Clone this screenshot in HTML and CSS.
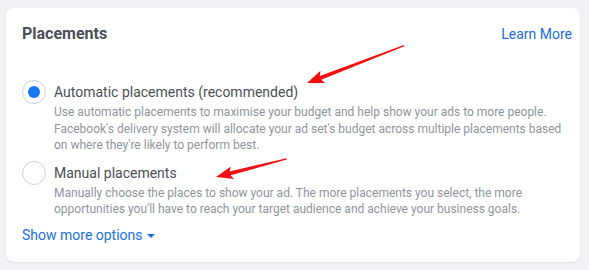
FILE: index.html
```html
<!DOCTYPE html>
<html lang="en">
<head>
  <meta charset="UTF-8">
  <title>Placements</title>
  <link rel="stylesheet" href="styles.css">
</head>
<body>
  <div class="card">
    <div class="card-head">
      <h2 class="card-title">Placements</h2>
      <a class="link" href="#">Learn More</a>
    </div>
    <div class="options">
      <div class="option">
        <span class="radio checked"></span>
        <div class="option-text">
          <div class="option-label">Automatic placements (recommended)</div>
          <div class="option-desc">Use automatic placements to maximise your budget and help show your ads to more people. Facebook's delivery system will allocate your ad set's budget across multiple placements based on where they're likely to perform best.</div>
        </div>
      </div>
      <div class="option">
        <span class="radio"></span>
        <div class="option-text">
          <div class="option-label">Manual placements</div>
          <div class="option-desc">Manually choose the places to show your ad. The more placements you select, the more opportunities you'll have to reach your target audience and achieve your business goals.</div>
        </div>
      </div>
    </div>
    <a class="link more" href="#">Show more options <span class="caret"></span></a>
  </div>

  <!-- annotation arrows -->
  <svg class="marks" width="589" height="270" viewBox="0 0 589 270">
    <g transform="translate(307,83) rotate(-21.08)" fill="#f01010">
      <polygon points="0,0 17,-6.5 14.5,-2 104,-0.6 104,0.6 14.5,2 17,6.5"/>
    </g>
    <g transform="translate(216,177) rotate(-14.42)" fill="#f01010">
      <polygon points="0,0 17,-6.5 14.5,-2 73,-0.6 73,0.6 14.5,2 17,6.5"/>
    </g>
  </svg>
</body>
</html>
```

FILE: styles.css
```css
:root {
  --bg: #f0f2f5;
  --blue: #216fdb;
  --text: #4b4f56;
  --muted: #90949c;
  --border: #ccd0d5;
}
body { margin:0; background:var(--bg); font-family:Roboto, "Liberation Sans", sans-serif; position:relative; }
.card { margin:8px 9px 8px 6px; background:#fff; border-radius:8px; padding:16px 8px 17px 16px;
  box-shadow:0 1px 2px rgba(0,0,0,0.08);
}
.card-head { display:flex; justify-content:space-between; align-items:center; height:20px; }
.card-title { margin:0; font-size:16px; font-weight:700; color:#4b4f56; line-height:20px; }
.link { color:var(--blue); text-decoration:none; font-size:14px; line-height:20px; }
.options { margin-top:36px; display:flex; flex-direction:column; gap:7px; }
.option { display:flex; gap:8px; align-items:flex-start; }
.radio { flex:none; width:22px; height:22px; border:1px solid var(--border); border-radius:50%;
  display:flex; align-items:center; justify-content:center; }
.radio.checked::after { content:''; width:12px; height:12px; border-radius:50%; background:#1877f2; }
.option-text { flex:1; padding-right:8px; }
.option-label { font-size:14px; line-height:24px; color:var(--text); }
.option-desc { font-size:12px; line-height:16.5px; color:var(--muted); }
.more { display:inline-block; margin-top:7px; }
.caret { display:inline-block; width:0; height:0; border-left:4px solid transparent; border-right:4px solid transparent;
  border-top:4px solid var(--blue); vertical-align:middle; margin-left:1px; }
.marks { position:absolute; left:0; top:0; pointer-events:none; }
```
